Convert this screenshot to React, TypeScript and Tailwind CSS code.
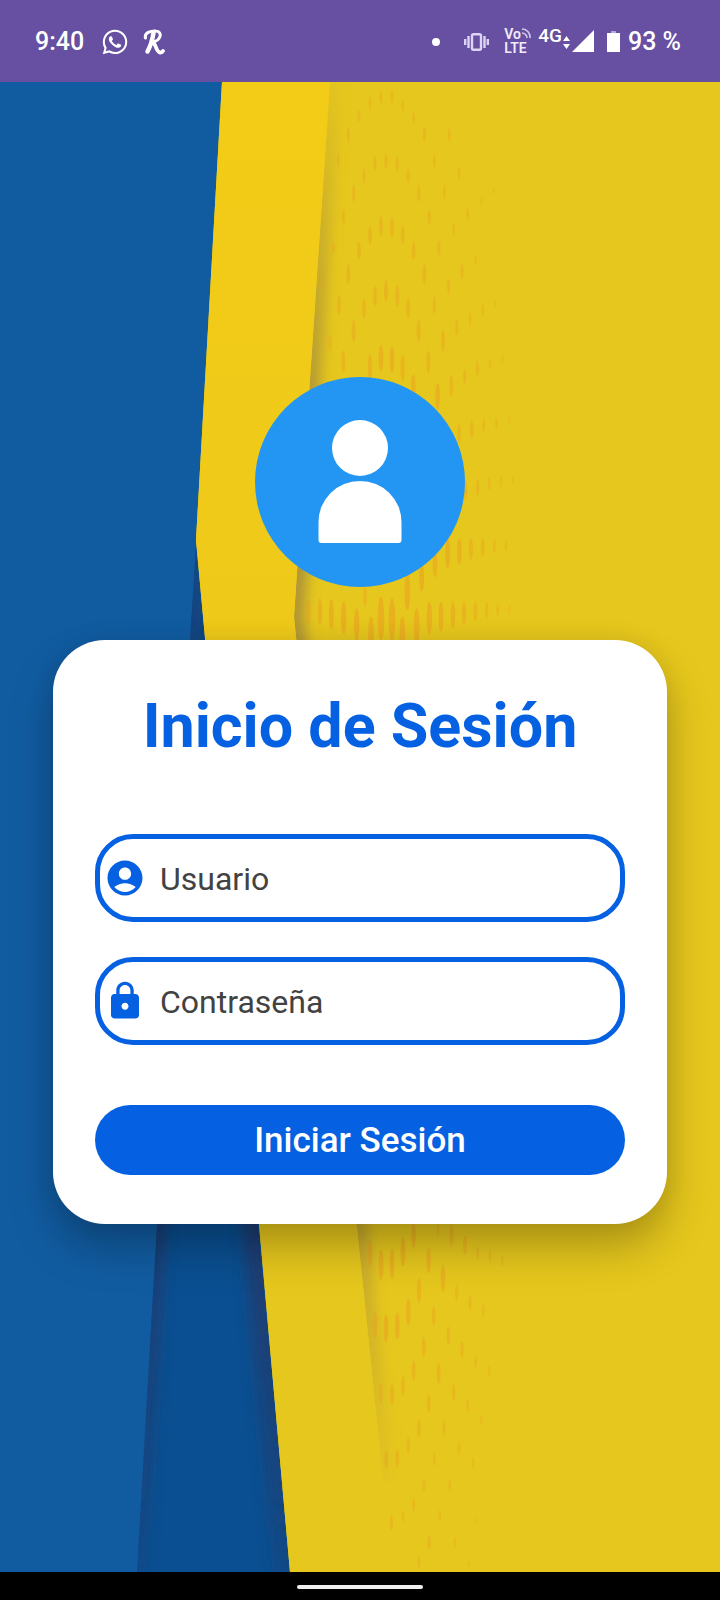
import { MdLock } from "react-icons/md";
import { FaWhatsapp } from "react-icons/fa";

type Dash = [x: number, y: number, height: number];

const upperDashes: Dash[] = [
  [603, 50, 40], [636, 50, 40], [570, 70, 36], [668, 76, 36], [537, 108, 36], [701, 115, 36],
  [505, 165, 44], [733, 163, 44], [808, 165, 40], [475, 240, 40], [763, 243, 40], [585, 250, 44],
  [618, 245, 44], [652, 254, 44], [552, 288, 44], [685, 288, 44], [837, 278, 36], [521, 340, 50],
  [716, 340, 50], [793, 335, 40], [490, 410, 44], [748, 412, 44], [863, 403, 36], [905, 362, 26],
  [941, 332, 20], [603, 438, 60], [636, 442, 60], [570, 465, 55], [668, 465, 55], [460, 502, 40],
  [537, 512, 55], [701, 512, 55], [777, 505, 44], [821, 448, 36], [505, 582, 60], [733, 582, 60],
  [846, 574, 44], [887, 540, 28], [431, 612, 40], [618, 632, 66], [585, 648, 60], [652, 648, 62],
  [806, 620, 44], [477, 676, 58], [763, 676, 52], [552, 685, 60], [685, 685, 60], [909, 690, 32],
  [870, 717, 40], [521, 752, 66], [716, 752, 66], [830, 743, 46], [789, 782, 64], [450, 787, 46],
  [946, 670, 20], [603, 835, 80], [636, 838, 80], [490, 845, 66], [745, 845, 66], [570, 860, 75],
  [668, 865, 75], [892, 865, 46], [930, 850, 30], [967, 838, 28], [700, 920, 75], [814, 918, 62],
  [773, 950, 80], [854, 890, 44], [837, 1060, 56], [875, 1048, 54], [911, 1035, 40], [949, 1030, 32],
  [988, 1022, 22], [857, 1230, 60], [893, 1222, 50], [928, 1210, 40], [963, 1205, 34], [998, 1200, 24],
  [803, 1420, 90], [838, 1415, 80], [873, 1407, 66], [908, 1402, 56], [943, 1398, 42], [978, 1396, 32],
  [555, 1550, 60], [765, 1450, 85], [725, 1490, 90], [682, 1535, 110], [385, 1595, 70], [420, 1595, 80],
  [454, 1603, 90], [491, 1613, 100], [530, 1635, 100], [603, 1615, 130], [636, 1620, 130], [573, 1665, 110],
  [667, 1665, 110], [710, 1640, 110], [748, 1615, 100], [783, 1610, 90], [819, 1605, 80], [852, 1600, 70],
  [886, 1594, 60], [920, 1590, 50], [953, 1589, 36], [988, 1590, 28],
];

const lowerDashes: Dash[] = [
  [881, 105, 80], [849, 155, 90], [816, 192, 90], [783, 195, 90], [750, 160, 80], [954, 90, 40],
  [995, 105, 66], [1035, 135, 60], [1073, 158, 40], [1110, 168, 36], [1147, 185, 30], [926, 182, 76],
  [969, 235, 80], [1010, 278, 50], [1050, 308, 44], [1090, 330, 36], [897, 272, 76], [865, 336, 80],
  [832, 378, 80], [798, 385, 84], [765, 375, 80], [941, 348, 60], [985, 406, 54], [1026, 448, 50],
  [1067, 485, 36], [1107, 512, 30], [911, 440, 60], [881, 512, 60], [849, 558, 60], [816, 582, 64],
  [783, 580, 60], [956, 520, 64], [1001, 577, 50], [1043, 618, 40], [1083, 660, 30], [926, 610, 56],
  [897, 685, 54], [865, 736, 50], [832, 775, 54], [799, 778, 56], [972, 684, 46], [1017, 745, 40],
  [1059, 790, 34], [943, 778, 40], [912, 857, 40], [989, 857, 36], [881, 914, 40], [849, 950, 34],
  [814, 968, 46], [959, 946, 34], [1070, 962, 18], [928, 1028, 44], [1005, 1028, 30], [897, 1085, 36],
  [1047, 1092, 20],
];

function Dashes({ items }: { items: Dash[] }) {
  return (
    <>
      {items.map(([x, y, h]) => (
        <ellipse
          key={`${x}-${y}`}
          cx={x}
          cy={y}
          rx={2 + h * 0.06}
          ry={h / 2}
          opacity={Math.min(0.55, 0.14 + h / 230)}
        />
      ))}
    </>
  );
}

function Backdrop() {
  return (
    <svg
      className="absolute inset-0 h-full w-full"
      viewBox="0 82 720 1490"
      preserveAspectRatio="none"
      aria-hidden="true"
    >
      <defs>
        <linearGradient id="band" x1="0" y1="0" x2="0" y2="1">
          <stop offset="0" stopColor="#f2cc16" />
          <stop offset="0.4" stopColor="#eec91a" />
          <stop offset="0.75" stopColor="#e6c71d" />
        </linearGradient>
        <linearGradient id="fold" gradientUnits="userSpaceOnUse" x1="0" y1="82" x2="0" y2="1480">
          <stop offset="0" stopColor="#9a8340" stopOpacity="0.05" />
          <stop offset="0.25" stopColor="#968040" stopOpacity="0.75" />
          <stop offset="0.75" stopColor="#a58a3a" stopOpacity="0.8" />
          <stop offset="1" stopColor="#b79b38" stopOpacity="0.1" />
        </linearGradient>
        <linearGradient id="crease" gradientUnits="userSpaceOnUse" x1="0" y1="540" x2="0" y2="1572">
          <stop offset="0" stopColor="#213a6c" stopOpacity="0.2" />
          <stop offset="0.6" stopColor="#213a6c" />
          <stop offset="1" stopColor="#213a6c" stopOpacity="0.3" />
        </linearGradient>
        <filter id="soft" x="-100%" y="-10%" width="300%" height="120%">
          <feGaussianBlur stdDeviation="7 2" />
        </filter>
        <clipPath id="yellowSide">
          <path d="M330 82 L294 617 L383 1480 L392 1572 H720 V82Z" />
        </clipPath>
        <clipPath id="wedge">
          <path d="M196 545 L190 640 L157 1224 L137 1572 H290 L205 640Z" />
        </clipPath>
      </defs>
      <rect x="0" y="82" width="720" height="1490" fill="#115ca1" />
      <path d="M196 545 L190 640 L157 1224 L137 1572 H290 L205 640Z" fill="#0a4f91" />
      <g clipPath="url(#wedge)">
        <path d="M196 540 L157 1224 L137 1572" fill="none" stroke="url(#crease)" strokeWidth="18" filter="url(#soft)" />
        <path d="M196 540 L259 1224 L290 1572" fill="none" stroke="url(#crease)" strokeWidth="34" filter="url(#soft)" />
      </g>
      <path d="M222 82 L196 540 L259 1224 L290 1572 H720 V82Z" fill="#e6c71d" />
      <g clipPath="url(#yellowSide)">
        <path d="M330 82 L294 617 L383 1480" fill="none" stroke="url(#fold)" strokeWidth="20" filter="url(#soft)" />
      </g>
      <g fill="#eb9f20">
        <g transform="translate(180 80) scale(0.33333)">
          <Dashes items={upperDashes} />
        </g>
        <g transform="translate(120 1200) scale(0.33333)">
          <Dashes items={lowerDashes} />
        </g>
      </g>
      <path d="M222 82 L196 540 L259 1224 L290 1572 H392 L383 1480 L294 617 L330 82Z" fill="url(#band)" />
    </svg>
  );
}

function StatusBar() {
  return (
    <header className="flex h-[82px] shrink-0 items-center justify-between bg-[#6750a2] pt-[2px] pr-[39px] pl-[35px] text-[25px] font-medium text-white">
      <div className="flex items-center">
        <span>9:40</span>
        <FaWhatsapp className="ml-[17px] h-[28px] w-[28px]" aria-hidden="true" />
        <svg className="ml-[14px] h-[26px] w-[22px]" viewBox="0 0 22 26" fill="none" stroke="currentColor" strokeLinecap="round" strokeLinejoin="round" aria-hidden="true">
          <path d="M2.500 9C1 4 8 1.500 13 2c7 .5 5 10-4 11" strokeWidth="3" />
          <path d="M10.500 4C9.500 10 7 18 4.500 22.500" strokeWidth="4.500" />
          <path d="M9 13c4 0 3.500 10 8 10.500 1.500.2 2.500-.5 3-1.500" strokeWidth="3.800" />
        </svg>
      </div>
      <div className="flex items-center">
        <span className="h-2 w-2 rounded-full bg-white" />
        <svg className="ml-6 h-[18px] w-[25px]" viewBox="0 0 25 18" fill="none" stroke="#ddd3f3" aria-hidden="true">
          <rect x="8" y="1.200" width="9" height="15.600" rx="1.500" strokeWidth="2.400" />
          <path d="M4.500 3v12M20.500 3v12M1.200 6v6M23.800 6v6" strokeWidth="2.400" />
        </svg>
        <div className="ml-[15px] flex w-[27px] flex-col pb-[2px] text-sm leading-[14px] font-semibold text-[#f0ebfa]">
          <span className="flex">
            Vo
            <svg className="h-3 w-[10px]" viewBox="0 0 10 12" fill="none" stroke="#d5caee" strokeWidth="1.600" aria-hidden="true">
              <path d="M1 2a8 8 0 0 1 8 9M1 6a5 5 0 0 1 5 5" />
            </svg>
          </span>
          <span>LTE</span>
        </div>
        <span className="ml-[7px] pb-3 text-[19px] leading-5">4G</span>
        <svg className="ml-px h-[13px] w-[7px]" viewBox="0 0 7 13" fill="currentColor" aria-hidden="true">
          <path d="M3.500 0 7 5H0zM3.500 13 0 8h7z" />
        </svg>
        <svg className="mb-[2px] ml-[2px] h-[22px] w-[22px]" viewBox="0 0 22 22" fill="currentColor" aria-hidden="true">
          <path d="M22 0V22H0z" />
        </svg>
        <svg className="mr-[8px] mb-[2px] ml-[13px] h-[21px] w-[13px]" viewBox="0 0 13 21" fill="currentColor" aria-hidden="true">
          <path d="M4 0h5v2H4z" opacity="0.5" />
          <path d="M0 2h13v19H0z" />
        </svg>
        <span>93 %</span>
      </div>
    </header>
  );
}

function AccountIcon() {
  return (
    <svg className="h-[42px] w-[42px]" viewBox="0 0 24 24" fill="currentColor" aria-hidden="true">
      <path d="M12 2C6.480 2 2 6.480 2 12s4.480 10 10 10 10-4.480 10-10S17.520 2 12 2zm0 4c1.930 0 3.500 1.570 3.500 3.500S13.930 13 12 13s-3.500-1.570-3.500-3.500S10.070 6 12 6zm0 14c-2.030 0-4.430-.82-6.140-2.880C7.550 15.800 9.680 15 12 15s4.450.8 6.140 2.120C16.430 19.180 14.030 20 12 20z" />
    </svg>
  );
}

const fieldClass =
  "flex h-[88px] items-center gap-[14px] rounded-[38px] border-[5px] border-[#0561e2] pl-1 text-[#0561e2]";
const inputClass =
  "h-full min-w-0 flex-1 rounded-r-[33px] bg-transparent pt-[2px] text-[32px] text-[#424242] outline-none placeholder:text-[#424242]";

export default function App() {
  return (
    <div className="flex min-h-screen flex-col font-['Roboto',sans-serif]">
      <StatusBar />
      <main className="relative flex flex-1 flex-col overflow-hidden">
        <Backdrop />
        <div className="relative flex flex-col items-center px-[53px] pt-[295px] pb-20">
          <svg className="h-[210px] w-[210px]" viewBox="0 0 210 210" role="img" aria-label="Usuario">
            <circle cx="105" cy="105" r="105" fill="#2396f3" />
            <circle cx="105" cy="71" r="28" fill="white" />
            <path d="M63.500 163V145a41.500 41 0 0 1 83 0V163q0 3-3 3H66.500q-3 0-3-3z" fill="white" />
          </svg>
          <form
            className="mt-[53px] flex w-full flex-col rounded-[52px] bg-white px-[42px] pt-[51px] pb-[49px] shadow-[0_24px_44px_rgba(0,0,0,0.25),0_0_24px_rgba(0,0,0,0.07)]"
            onSubmit={(event) => event.preventDefault()}
          >
            <h1 className="text-center text-[61px] leading-[70px] font-bold text-[#0561e2]">Inicio de Sesión</h1>
            <div className="mt-[73px] flex flex-col gap-[35px]">
              <label className={fieldClass}>
                <AccountIcon />
                <input className={inputClass} type="text" name="user" placeholder="Usuario" aria-label="Usuario" />
              </label>
              <label className={fieldClass}>
                <MdLock className="h-[42px] w-[42px]" aria-hidden="true" />
                <input className={inputClass} type="password" name="password" placeholder="Contraseña" aria-label="Contraseña" />
              </label>
            </div>
            <button type="submit" className="mt-[60px] h-[70px] rounded-full bg-[#0561e2] pt-[2px] text-[35px] font-medium text-white">
              Iniciar Sesión
            </button>
          </form>
        </div>
      </main>
      <footer className="flex h-7 shrink-0 items-center justify-center bg-black pt-[2px]">
        <span className="h-1 w-[126px] rounded-full bg-[#eeeeee]" />
      </footer>
    </div>
  );
}
